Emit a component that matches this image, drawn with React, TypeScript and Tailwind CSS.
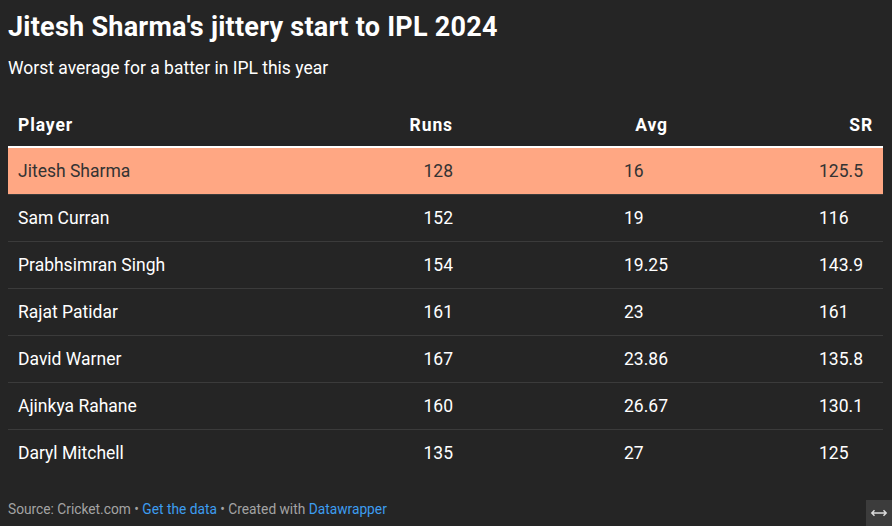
const rows = [
  { name: "Jitesh Sharma", runs: "128", avg: "16", avgPad: ".00", sr: "125.5", srPad: "", hi: true },
  { name: "Sam Curran", runs: "152", avg: "19", avgPad: ".00", sr: "116", srPad: ".0" },
  { name: "Prabhsimran Singh", runs: "154", avg: "19.25", avgPad: "", sr: "143.9", srPad: "" },
  { name: "Rajat Patidar", runs: "161", avg: "23", avgPad: ".00", sr: "161", srPad: ".0" },
  { name: "David Warner", runs: "167", avg: "23.86", avgPad: "", sr: "135.8", srPad: "" },
  { name: "Ajinkya Rahane", runs: "160", avg: "26.67", avgPad: "", sr: "130.1", srPad: "" },
  { name: "Daryl Mitchell", runs: "135", avg: "27", avgPad: ".00", sr: "125", srPad: ".0" },
];

export default function App() {
  return (
    <div className="relative h-[526px] w-[892px] overflow-hidden bg-[#252525] pl-[8px] pr-[9px] font-['Roboto',sans-serif] text-white">
      <h1 className="pt-[11px] text-[27px] font-bold leading-[32px] tracking-[0.25px]">Jitesh Sharma's jittery start to IPL 2024</h1>
      <p className="mt-[14px] text-[17.5px] leading-[22px]">Worst average for a batter in IPL this year</p>

      <div className="mt-[35px]">
        <div className="flex border-b-2 border-white pb-[10px] text-[17.5px] font-bold leading-[22px] tracking-[0.9px]">
          <div className="w-[300px] pl-[10px]">Player</div>
          <div className="w-[145px] text-right">Runs</div>
          <div className="w-[215px] text-right">Avg</div>
          <div className="w-[205px] text-right">SR</div>
        </div>
        {rows.map((r, i) => (
          <div
            key={r.name}
            className={`flex text-[17.5px] leading-[46px] ${i < rows.length - 1 ? "border-b border-[#3b3b3b]" : ""} ${r.hi ? "bg-[#ffa783] text-[#333333]" : "text-white"}`}
          >
            <div className="w-[300px] pl-[10px]">{r.name}</div>
            <div className="w-[145px] text-right">{r.runs}</div>
            <div className="w-[215px] text-right">
              {r.avg}
              <span className="invisible">{r.avgPad}</span>
            </div>
            <div className="w-[205px] pr-[10px] text-right">
              {r.sr}
              <span className="invisible">{r.srPad}</span>
            </div>
          </div>
        ))}
      </div>

      <div className="mt-[23px] text-[13.75px] leading-[20px] text-[#a3a3a3]">
        Source: Cricket.com • <span className="text-[#3d9df0]">Get the data</span> • Created with{" "}
        <span className="text-[#3d9df0]">Datawrapper</span>
      </div>

      <div className="absolute bottom-0 right-0 flex h-[26px] w-[26px] items-center justify-center bg-[#3c3c3c]">
        <svg viewBox="0 0 20 10" className="h-[10px] w-[18px]" fill="none" stroke="#dddddd" strokeWidth="1.6">
          <path d="M2 5h16M5 2 2 5l3 3M15 2l3 3-3 3" />
        </svg>
      </div>
    </div>
  );
}
